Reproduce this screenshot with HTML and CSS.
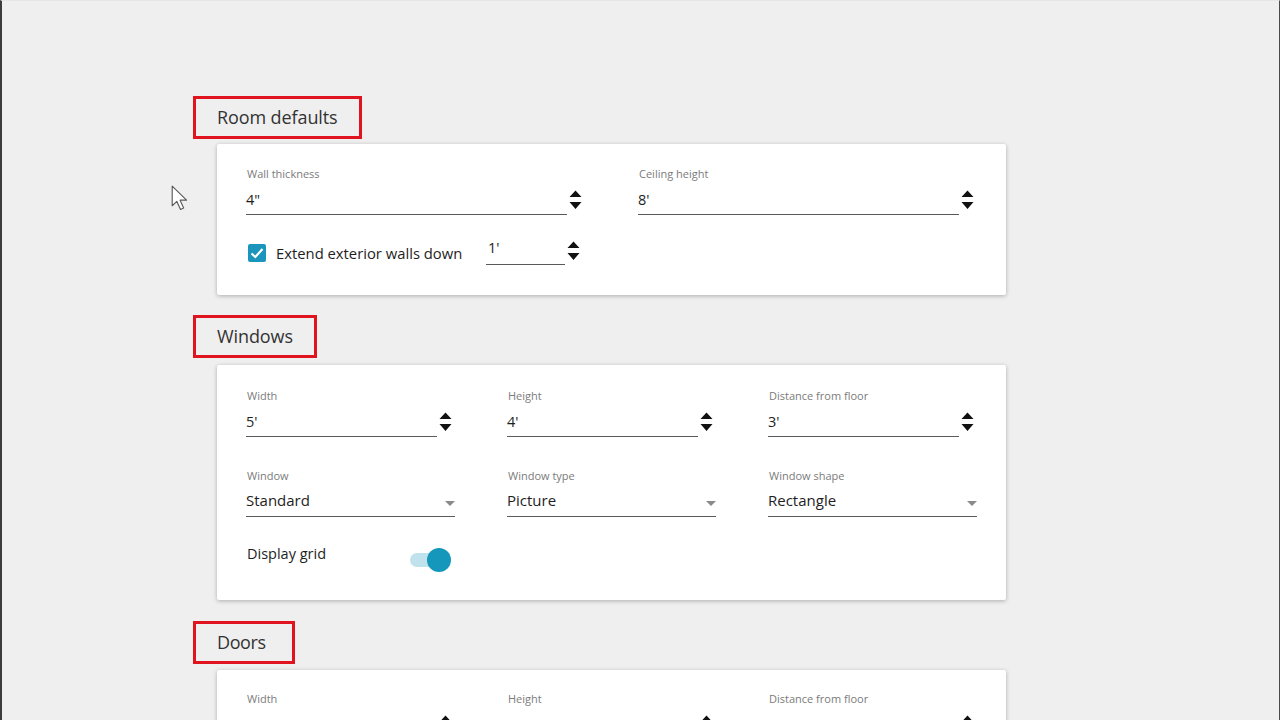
FILE: index.html
```html
<!DOCTYPE html>
<html lang="en">
<head>
<meta charset="utf-8">
<title>Settings</title>
<link rel="stylesheet" href="styles.css">
</head>
<body>
<div class="screen">
  <section class="section">
    <div class="heading h-room">Room defaults</div>
    <div class="card card-room">
      <div class="grid-2">
        <div class="field">
          <div class="label">Wall thickness</div>
          <div class="control">
            <div class="input w-wide">4"</div>
            <svg class="spin" viewBox="0 0 13 20"><path d="M6.5 0.5 L12.5 7 L0.5 7 Z M0.5 12 L12.5 12 L6.5 19 Z"/></svg>
          </div>
        </div>
        <div class="field">
          <div class="label">Ceiling height</div>
          <div class="control">
            <div class="input w-wide">8'</div>
            <svg class="spin" viewBox="0 0 13 20"><path d="M6.5 0.5 L12.5 7 L0.5 7 Z M0.5 12 L12.5 12 L6.5 19 Z"/></svg>
          </div>
        </div>
      </div>
      <div class="check-row">
        <div class="check">
          <span class="box"><svg viewBox="0 0 18 18"><path d="M3.5 9.5 L7.3 13 L14.5 5" /></svg></span>
          <span class="check-text">Extend exterior walls down</span>
        </div>
        <div class="control">
          <div class="input w-mini">1'</div>
          <svg class="spin" viewBox="0 0 13 20"><path d="M6.5 0.5 L12.5 7 L0.5 7 Z M0.5 12 L12.5 12 L6.5 19 Z"/></svg>
        </div>
      </div>
    </div>
  </section>

  <section class="section">
    <div class="heading h-windows">Windows</div>
    <div class="card card-windows">
      <div class="grid-3">
        <div class="field">
          <div class="label">Width</div>
          <div class="control">
            <div class="input w-mid">5'</div>
            <svg class="spin" viewBox="0 0 13 20"><path d="M6.5 0.5 L12.5 7 L0.5 7 Z M0.5 12 L12.5 12 L6.5 19 Z"/></svg>
          </div>
        </div>
        <div class="field">
          <div class="label">Height</div>
          <div class="control">
            <div class="input w-mid">4'</div>
            <svg class="spin" viewBox="0 0 13 20"><path d="M6.5 0.5 L12.5 7 L0.5 7 Z M0.5 12 L12.5 12 L6.5 19 Z"/></svg>
          </div>
        </div>
        <div class="field">
          <div class="label">Distance from floor</div>
          <div class="control">
            <div class="input w-mid">3'</div>
            <svg class="spin" viewBox="0 0 13 20"><path d="M6.5 0.5 L12.5 7 L0.5 7 Z M0.5 12 L12.5 12 L6.5 19 Z"/></svg>
          </div>
        </div>
      </div>
      <div class="grid-3 row-select">
        <div class="field">
          <div class="label">Window</div>
          <div class="select">Standard<span class="caret"></span></div>
        </div>
        <div class="field">
          <div class="label">Window type</div>
          <div class="select">Picture<span class="caret"></span></div>
        </div>
        <div class="field">
          <div class="label">Window shape</div>
          <div class="select">Rectangle<span class="caret"></span></div>
        </div>
      </div>
      <div class="toggle-row">
        <span class="toggle-label">Display grid</span>
        <span class="toggle"><span class="track"></span><span class="thumb"></span></span>
      </div>
    </div>
  </section>

  <section class="section">
    <div class="heading h-doors">Doors</div>
    <div class="card card-doors">
      <div class="grid-3">
        <div class="field">
          <div class="label">Width</div>
          <div class="control">
            <div class="input w-mid"></div>
            <svg class="spin" viewBox="0 0 13 20"><path d="M6.5 0.5 L12.5 7 L0.5 7 Z M0.5 12 L12.5 12 L6.5 19 Z"/></svg>
          </div>
        </div>
        <div class="field">
          <div class="label">Height</div>
          <div class="control">
            <div class="input w-mid"></div>
            <svg class="spin" viewBox="0 0 13 20"><path d="M6.5 0.5 L12.5 7 L0.5 7 Z M0.5 12 L12.5 12 L6.5 19 Z"/></svg>
          </div>
        </div>
        <div class="field">
          <div class="label">Distance from floor</div>
          <div class="control">
            <div class="input w-mid"></div>
            <svg class="spin" viewBox="0 0 13 20"><path d="M6.5 0.5 L12.5 7 L0.5 7 Z M0.5 12 L12.5 12 L6.5 19 Z"/></svg>
          </div>
        </div>
      </div>
    </div>
  </section>

  <svg class="cursor" viewBox="0 0 17 26"><path d="M1 1 L1 20 L5.5 15.8 L9 23.5 L12 22.2 L8.6 14.6 L14.8 14.6 Z"/></svg>
</div>
</body>
</html>
```

FILE: styles.css
```css
html, body {
  margin: 0;
  padding: 0;
  background: #efefef;
}

body {
  font-family: "Open Sans", "Noto Sans", "Liberation Sans", sans-serif;
  color: #1e1e1e;
}

.screen {
  position: relative;
  box-sizing: border-box;
  width: 1280px;
  height: 720px;
  overflow: hidden;
  border-left: 2px solid #3c3c3c;
  border-right: 1px solid #4a4a4a;
  border-top: 1px solid #e6e6e6;
  padding: 95px 0 0 191px;
  background: #efefef;
}

.section {
  display: flow-root;
  margin-bottom: 20px;
}

.heading {
  display: block;
  box-sizing: border-box;
  height: 43px;
  border: 3px solid #e0141e;
  padding: 0 0 0 21px;
  font-size: 18px;
  line-height: 37px;
  color: #333333;
  letter-spacing: -0.1px;
}

.h-room { width: 169px; }
.h-windows { width: 124px; }
.h-doors { width: 102px; letter-spacing: -0.4px; margin-top: 1px; }

.card {
  box-sizing: border-box;
  width: 789px;
  margin: 5px 0 0 24px;
  background: #ffffff;
  border-radius: 2px;
  box-shadow: 0 1px 4px rgba(0, 0, 0, 0.28);
  padding-left: 29px;
}

.card-room {
  height: 151px;
  padding-top: 23px;
}

.card-windows {
  height: 235px;
  margin-top: 7px;
  padding-top: 24px;
}

.card-doors {
  height: 120px;
  margin-top: 6px;
  padding-top: 22px;
}

.grid-2 {
  display: grid;
  grid-template-columns: 392px 392px;
}

.grid-3 {
  display: grid;
  grid-template-columns: 261px 261px 261px;
}

.field {
  display: flex;
  flex-direction: column;
}

.label {
  font-size: 11px;
  line-height: 14px;
  color: #7b7b7b;
  padding-left: 1px;
}

.control {
  display: flex;
  align-items: center;
}

.input {
  box-sizing: border-box;
  height: 34px;
  padding-top: 9px;
  font-size: 14.5px;
  line-height: 20px;
  color: #1e1e1e;
  border-bottom: 1px solid #5a5a5a;
}

.w-wide { width: 321px; }
.w-mid { width: 191px; }
.w-mini { width: 79px; height: 32px; padding: 5px 0 0 2px; }

.spin {
  width: 13px;
  height: 20px;
  margin: 3px 0 0 2px;
  fill: #111111;
}

.check-row {
  display: flex;
  align-items: center;
  height: 32px;
  margin-top: 18px;
}

.check {
  display: flex;
  align-items: center;
  margin-top: 7px;
  padding-left: 2px;
  width: 238px;
}

.box {
  display: inline-flex;
  width: 18px;
  height: 18px;
  border-radius: 2px;
  background: #1b95bb;
  margin-right: 10px;
}

.box svg {
  width: 18px;
  height: 18px;
  fill: none;
  stroke: #ffffff;
  stroke-width: 2.2;
}

.check-text {
  font-size: 14.8px;
  line-height: 20px;
  color: #1e1e1e;
}

.row-select {
  margin-top: 32px;
}

.select {
  position: relative;
  box-sizing: border-box;
  width: 209px;
  height: 34px;
  padding-top: 6px;
  font-size: 15px;
  line-height: 22px;
  color: #1e1e1e;
  border-bottom: 1px solid #5a5a5a;
}

.caret {
  position: absolute;
  right: 0;
  top: 18px;
  width: 0;
  height: 0;
  border-left: 5px solid transparent;
  border-right: 5px solid transparent;
  border-top: 5px solid #8a8a8a;
}

.toggle-row {
  display: flex;
  align-items: flex-start;
  margin-top: 24px;
  height: 32px;
}

.toggle-label {
  width: 163px;
  padding-left: 1px;
  margin-top: 3px;
  font-size: 14.5px;
  line-height: 20px;
  color: #1e1e1e;
}

.toggle {
  position: relative;
  display: inline-block;
  width: 41px;
  height: 24px;
  margin-top: 7px;
}

.track {
  position: absolute;
  left: 0;
  top: 5px;
  width: 34px;
  height: 14px;
  border-radius: 7px;
  background: #bfe2ed;
}

.thumb {
  position: absolute;
  right: 0;
  top: 0;
  width: 24px;
  height: 24px;
  border-radius: 50%;
  background: #1596bb;
}

.cursor {
  position: absolute;
  left: 169px;
  top: 184px;
  width: 18px;
  height: 27px;
  fill: #ffffff;
  stroke: #5a5a5a;
  stroke-width: 1.1;
  stroke-linejoin: round;
}
```
